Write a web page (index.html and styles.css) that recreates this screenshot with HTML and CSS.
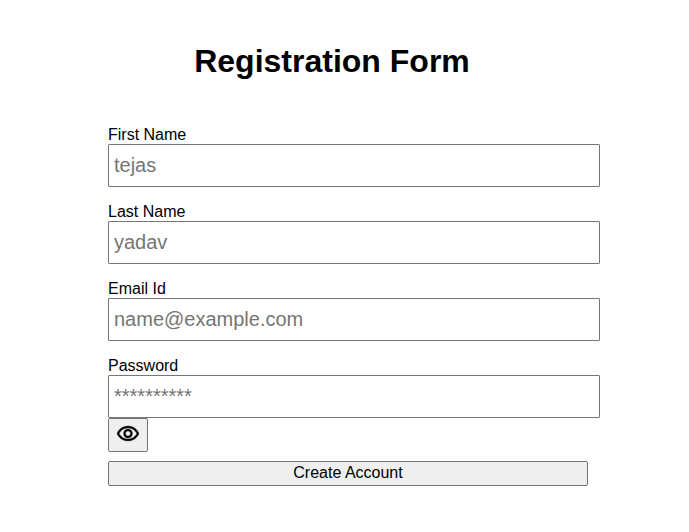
FILE: index.html
```html
<!DOCTYPE html>
<html lang="en">
<head>
<meta charset="utf-8">
<title>Registration Form</title>
<link rel="stylesheet" href="styles.css">
</head>
<body>
<main class="page">
  <h1 class="title">Registration Form</h1>
  <form class="form">
    <div class="field">
      <label for="first">First Name</label>
      <input id="first" type="text" placeholder="tejas">
    </div>
    <div class="field">
      <label for="last">Last Name</label>
      <input id="last" type="text" placeholder="yadav">
    </div>
    <div class="field">
      <label for="email">Email Id</label>
      <input id="email" type="email" placeholder="name@example.com">
    </div>
    <div class="field">
      <label for="password">Password</label>
      <input id="password" type="password" placeholder="**********">
      <button class="toggle" type="button" aria-label="Show password">
        <svg class="eye" viewBox="0 0 24 24" aria-hidden="true"><path d="M12 6c3.79 0 7.17 2.13 8.82 5.500C19.170 14.870 15.790 17 12 17s-7.170-2.130-8.820-5.500C4.830 8.130 8.210 6 12 6m0-2C7 4 2.730 7.110 1 11.500 2.730 15.890 7 19 12 19s9.270-3.110 11-7.500C21.270 7.110 17 4 12 4zm0 5c1.380 0 2.500 1.120 2.500 2.500S13.380 14 12 14s-2.500-1.120-2.500-2.500S10.620 9 12 9m0-2c-2.480 0-4.500 2.020-4.500 4.500S9.520 16 12 16s4.500-2.020 4.500-4.500S14.480 7 12 7z"/></svg>
      </button>
    </div>
    <button class="submit" type="submit">Create Account</button>
  </form>
</main>
</body>
</html>
```
FILE: styles.css
```css
* {
  box-sizing: border-box;
}

body {
  margin: 0;
  background: #fff;
  color: #000;
  font: 16px/19px "Liberation Sans", Arial, sans-serif;
}

.page {
  padding: 42px 101px 0 108px;
}

.title {
  margin: 0 32px 45px 0;
  font-size: 32px;
  line-height: 38px;
  text-align: center;
}

.form {
  display: flex;
  flex-direction: column;
}

.field {
  display: flex;
  flex-direction: column;
  align-items: flex-start;
  margin-bottom: 15px;
}

.field:last-of-type {
  margin-bottom: 9px;
}

input {
  width: calc(100% + 12px);
  height: 43px;
  padding: 1px 5px;
  border: 1px solid #767676;
  border-radius: 1px;
  font: 20px "Liberation Sans", Arial, sans-serif;
}

input::placeholder {
  color: #757575;
}

.toggle,
.submit {
  border: 1px solid #767676;
  border-radius: 2px;
  background: #efefef;
  color: #000;
}

.toggle {
  width: 40px;
  height: 34px;
  padding: 2px 7px 4px;
}

.eye {
  display: block;
  width: 24px;
  height: 24px;
  stroke: #000;
  stroke-width: 0.3;
}

.submit {
  height: 25px;
  padding: 0 0 2px;
  font: 16px "Liberation Sans", Arial, sans-serif;
}
```
